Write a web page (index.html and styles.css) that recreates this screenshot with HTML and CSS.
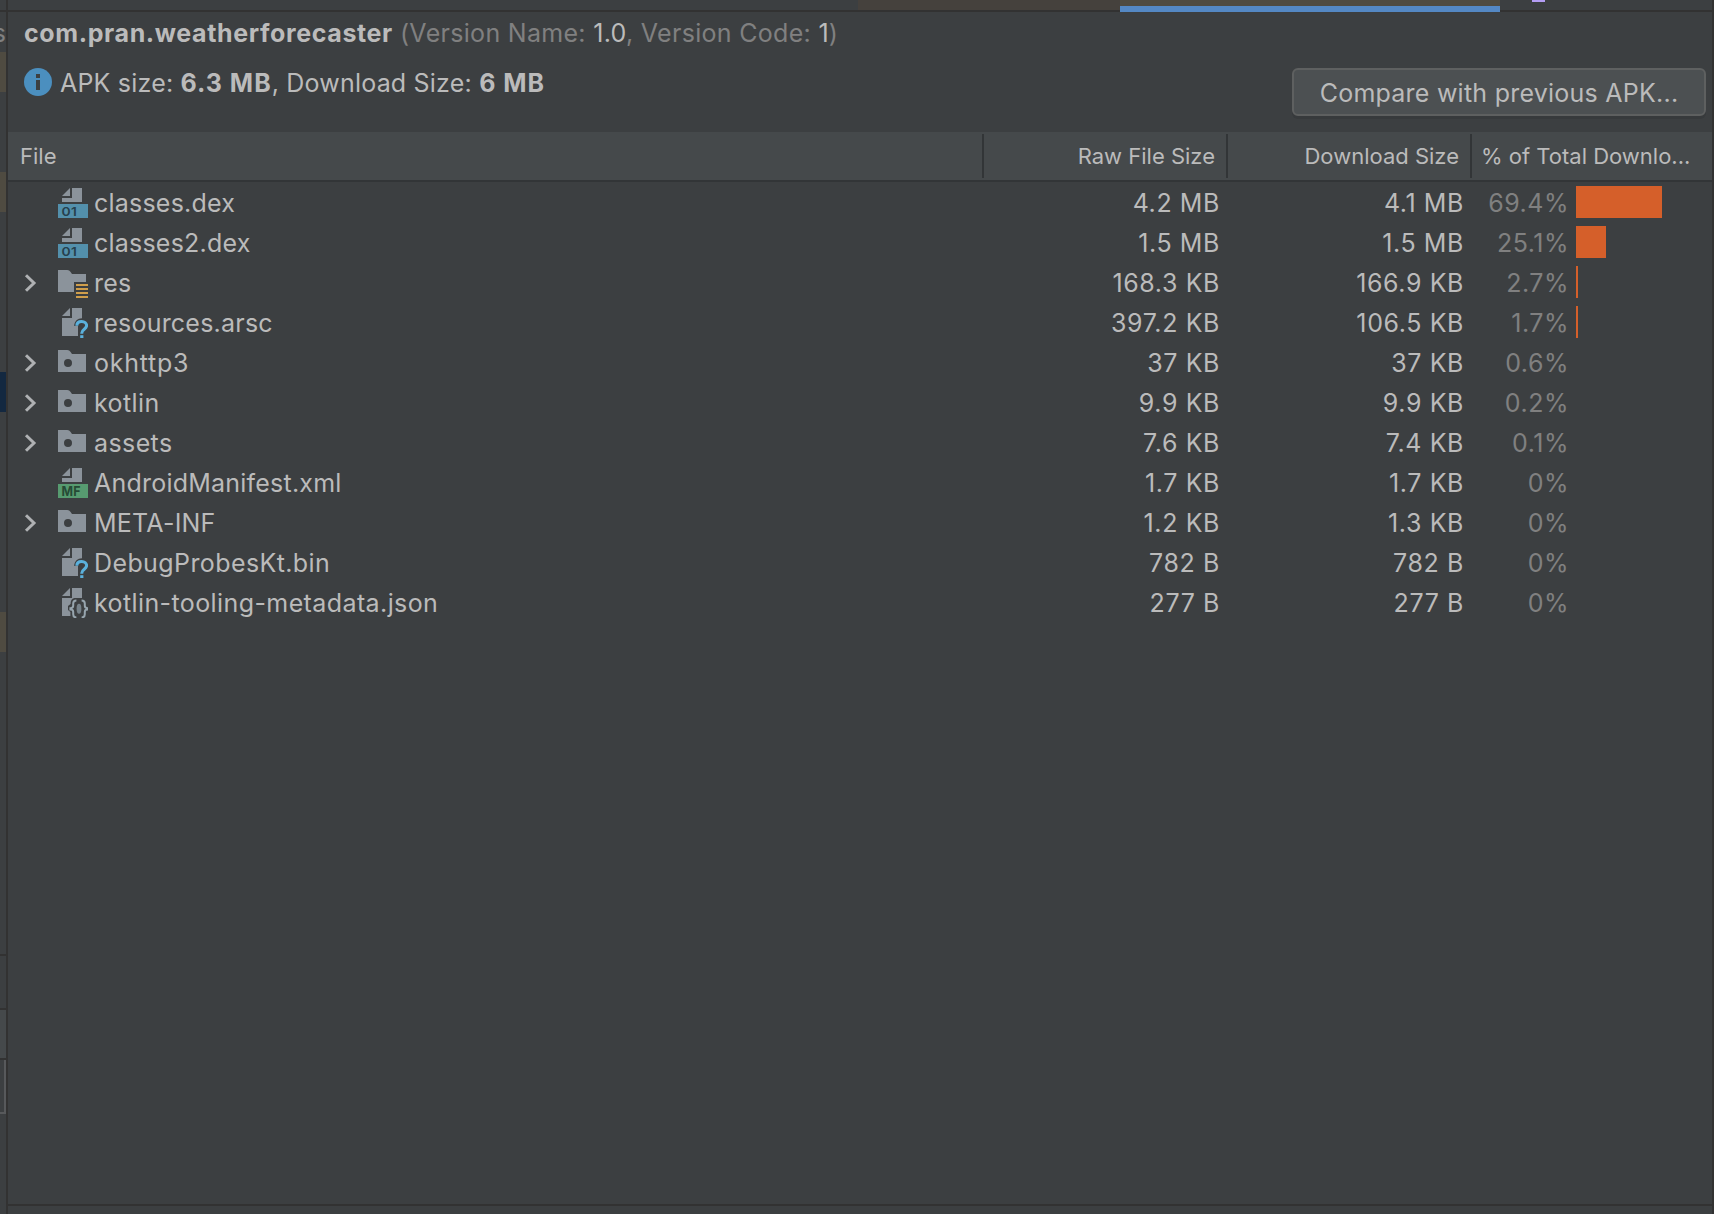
FILE: index.html
```html
<!DOCTYPE html>
<html lang="en">
<head>
<meta charset="utf-8">
<title>APK Analyzer</title>
<link rel="stylesheet" href="styles.css">
</head>
<body>
<svg class="defs" aria-hidden="true">
  <symbol id="page-half" viewBox="0 0 16 16"><path fill="#8b939b" d="M3 5l4-4v4zM8 1h5v7H3V6h5z"/></symbol>
  <symbol id="folder" viewBox="0 0 16 16"><path fill="#8b939b" fill-rule="evenodd" d="M1 2h4.6c.8 0 1.3.4 1.7 1L8 4h7v9H1zM6 6.5a2 2 0 1 0 0 4 2 2 0 0 0 0-4z"/></symbol>
  <symbol id="res" viewBox="0 0 16 16"><path fill="#8b939b" d="M1 2h4.6c.8 0 1.3.4 1.7 1L8 4h7v4H9v5H1z"/><path fill="#cf9e4b" d="M10 9h6v1h-6zM10 11h6v1h-6zM10 13h6v1h-6zM10 15h6v1h-6z"/></symbol>
  <symbol id="unknown" viewBox="0 0 16 16"><path fill="#8b939b" d="M3 5l4-4v4zM8 1h5v5.100c-2.200 0-3.800 1.400-3.900 3.900H11v5H3V6h5z"/><path fill="none" stroke="#5bb1dc" stroke-width="1.500" d="M10.400 9.900c0-1.400 1-2.200 2.400-2.200s2.500.9 2.500 2.100c0 1.800-2.400 1.800-2.400 3.700v.4"/><path fill="#5bb1dc" d="M12.100 14.600h1.600V16h-1.600z"/></symbol>
  <symbol id="json" viewBox="0 0 16 16"><path fill="#8b939b" d="M3 5l4-4v4zM8 1h5v5H9.200C7.800 6.400 7.300 7.400 7.300 9L6 10v2l1.200 1V15H3V6h5z"/><path fill="none" stroke="#97a5ae" d="M10.200 7.200c-1.300 0-1.600.6-1.600 1.600v1.100c0 .8-.4 1.200-1.400 1.200v.6c1 0 1.400.4 1.400 1.200v1.200c0 1 .3 1.600 1.600 1.600M12.800 7.200c1.300 0 1.600.6 1.600 1.600v1.100c0 .8.400 1.200 1.400 1.200v.6c-1 0-1.400.4-1.400 1.200v1.200c0 1-.3 1.600-1.600 1.600"/><ellipse cx="11.500" cy="11.400" rx="1.200" ry="2.500" fill="#77838b"/></symbol>
  <symbol id="chevron" viewBox="0 0 14 20"><path fill="none" stroke="#afb1b3" stroke-width="3" d="M2 2.200l8 7.800-8 7.800"/></symbol>
</svg>
<div class="window">
  <aside class="tool-strip">
    <div class="strip-head"></div>
    <div class="strip-label"><span>s</span></div>
    <div class="mark"></div>
    <div class="gap-80"></div>
    <div class="mark"></div>
    <div class="gap-160"></div>
    <div class="selection"></div>
    <div class="gap-200"></div>
    <div class="mark"></div>
    <div class="strip-rest"></div>
    <div class="strip-row"></div>
    <div class="strip-bar"></div>
    <div class="strip-box"></div>
  </aside>
  <main class="editor">
    <div class="tabs"><i class="tab"></i><i class="tab-active"></i><i class="tab-icon"></i></div>
    <header class="summary">
      <div class="info">
        <div class="title"><b>com.pran.weatherforecaster</b> <span class="version">(Version Name: <em>1.0</em>, Version Code: <em>1</em>)</span></div>
        <div class="sizes">
          <svg class="info-icon" viewBox="0 0 28 28"><circle cx="14" cy="14" r="14" fill="#4b8fbf"/><path fill="#3c3f41" d="M12 6h4v4h-4zM12 12h4v10h-4z"/></svg>
          <div class="size-text"><span>APK size: </span><b>6.3 MB</b><span>, Download Size: </span><b>6 MB</b></div>
        </div>
      </div>
      <button class="compare"><span>Compare with previous APK...</span></button>
    </header>
    <section class="table">
      <div class="head"><div>File</div><div>Raw File Size</div><div>Download Size</div><div class="left">% of Total Downlo...</div></div>
      <div class="row"><div class="name"><i class="arrow"></i><svg class="icon" viewBox="0 0 16 16"><use href="#page-half"/><path fill="#5390ac" d="M1 9h15v7H1z"/><text class="badge" x="2.700" y="14.800" textLength="8" lengthAdjust="spacingAndGlyphs">01</text></svg><span>classes.dex</span></div><div class="num">4.2 MB</div><div class="num">4.1 MB</div><div class="pct"><span>69.4%</span><i style="width:86px"></i></div></div>
      <div class="row"><div class="name"><i class="arrow"></i><svg class="icon" viewBox="0 0 16 16"><use href="#page-half"/><path fill="#5390ac" d="M1 9h15v7H1z"/><text class="badge" x="2.700" y="14.800" textLength="8" lengthAdjust="spacingAndGlyphs">01</text></svg><span>classes2.dex</span></div><div class="num">1.5 MB</div><div class="num">1.5 MB</div><div class="pct"><span>25.1%</span><i style="width:30px"></i></div></div>
      <div class="row"><div class="name"><svg class="arrow"><use href="#chevron"/></svg><svg class="icon"><use href="#res"/></svg><span>res</span></div><div class="num">168.3 KB</div><div class="num">166.9 KB</div><div class="pct"><span>2.7%</span><i style="width:2px"></i></div></div>
      <div class="row"><div class="name"><i class="arrow"></i><svg class="icon"><use href="#unknown"/></svg><span>resources.arsc</span></div><div class="num">397.2 KB</div><div class="num">106.5 KB</div><div class="pct"><span>1.7%</span><i style="width:2px"></i></div></div>
      <div class="row"><div class="name"><svg class="arrow"><use href="#chevron"/></svg><svg class="icon"><use href="#folder"/></svg><span class="wide">okhttp3</span></div><div class="num">37 KB</div><div class="num">37 KB</div><div class="pct"><span>0.6%</span></div></div>
      <div class="row"><div class="name"><svg class="arrow"><use href="#chevron"/></svg><svg class="icon"><use href="#folder"/></svg><span class="loose">kotlin</span></div><div class="num">9.9 KB</div><div class="num">9.9 KB</div><div class="pct"><span>0.2%</span></div></div>
      <div class="row"><div class="name"><svg class="arrow"><use href="#chevron"/></svg><svg class="icon"><use href="#folder"/></svg><span class="loose">assets</span></div><div class="num">7.6 KB</div><div class="num">7.4 KB</div><div class="pct"><span>0.1%</span></div></div>
      <div class="row"><div class="name"><i class="arrow"></i><svg class="icon" viewBox="0 0 16 16"><use href="#page-half"/><path fill="#579b70" d="M1 9h15v7H1z"/><text class="badge badge-mf" x="2.700" y="14.900" textLength="9.800" lengthAdjust="spacingAndGlyphs">MF</text></svg><span>AndroidManifest.xml</span></div><div class="num">1.7 KB</div><div class="num">1.7 KB</div><div class="pct"><span>0%</span></div></div>
      <div class="row"><div class="name"><svg class="arrow"><use href="#chevron"/></svg><svg class="icon"><use href="#folder"/></svg><span>META-INF</span></div><div class="num">1.2 KB</div><div class="num">1.3 KB</div><div class="pct"><span>0%</span></div></div>
      <div class="row"><div class="name"><i class="arrow"></i><svg class="icon"><use href="#unknown"/></svg><span class="loose">DebugProbesKt.bin</span></div><div class="num">782 B</div><div class="num">782 B</div><div class="pct"><span>0%</span></div></div>
      <div class="row"><div class="name"><i class="arrow"></i><svg class="icon"><use href="#json"/></svg><span class="loose">kotlin-tooling-metadata.json</span></div><div class="num">277 B</div><div class="num">277 B</div><div class="pct"><span>0%</span></div></div>
    </section>
    <footer class="status"></footer>
  </main>
</div>
</body>
</html>
```
FILE: styles.css
```css
* { box-sizing: border-box; }
body { margin: 0; background: #3c3f41; color: #bbbbbb; font: 25px "Inter", "Liberation Sans", sans-serif; overflow: hidden; }
.defs { position: absolute; width: 0; height: 0; }
.badge { font: 600 6.2px "Inter", sans-serif; fill: #26404d; }
.badge-mf { font-weight: 700; font-size: 6.8px; fill: #264a35; }
.window { display: flex; width: 1714px; height: 1214px; border-right: 2px solid #323232; }

.tool-strip { display: flex; flex-direction: column; width: 8px; border-right: 2px solid #323232; overflow: hidden; flex: none; }
.tool-strip > div { flex: none; }
.strip-head { height: 12px; border-bottom: 2px solid #323232; }
.strip-label { height: 40px; line-height: 42px; color: #808080; display: flex; justify-content: flex-end; overflow: hidden; }
.mark { height: 40px; background: #4f4b41; }
.gap-80 { height: 80px; }
.gap-160 { height: 160px; }
.gap-200 { height: 200px; }
.selection { height: 40px; background: #132840; }
.strip-rest { height: 304px; border-bottom: 2px solid #323232; }
.strip-row { height: 54px; border-bottom: 2px solid #323232; }
.strip-bar { height: 50px; background: #45494b; border-bottom: 2px solid #323232; }
.strip-box { height: 54px; border: solid #57595b; border-width: 0 2px 2px 0; }

.editor { display: flex; flex-direction: column; width: 1704px; }
.tabs { display: flex; height: 12px; border-bottom: 2px solid #323232; flex: none; }
.tab { margin-left: 850px; width: 262px; background: #45413d; }
.tab-active { width: 380px; height: 12px; background: #4f4b41; border-bottom: 6px solid #5488c4; }
.tab-icon { width: 13px; height: 2px; margin-left: 32px; background: #b39df3; }

.summary { display: flex; justify-content: space-between; height: 120px; flex: none; padding-right: 6px; }
.info { padding-left: 16px; }
.title { height: 40px; line-height: 42px; white-space: pre; }
.title b, .sizes b { font-weight: 700; }
.title b { letter-spacing: .62px; }
.version { color: #808080; letter-spacing: .3px; }
.version em { font-style: normal; color: #bbbbbb; }
.sizes { display: flex; align-items: center; height: 60px; }
.info-icon { width: 28px; height: 28px; margin-right: 8px; }
.size-text { white-space: pre; line-height: 42px; padding-top: 2px; letter-spacing: .2px; }
.size-text b { letter-spacing: 1px; }
.compare { width: 414px; height: 48px; margin-top: 56px; padding: 2px 0 0; border: 2px solid #5e6060; border-radius: 6px; background: #4c5052; box-shadow: 0 3px 0 #373a3c; color: #bbbbbb; font: inherit; letter-spacing: .24px; white-space: nowrap; }

.table { flex: 1; }
.head { display: grid; grid-template-columns: 974px 244px 244px 242px; height: 50px; padding: 2px 0; background: #45494b; border-bottom: 2px solid #323537; font-size: 22px; line-height: 44px; }
.head div { border-left: 2px solid #323537; padding-right: 11px; text-align: right; white-space: nowrap; }
.head div:first-child { border: 0; padding-left: 12px; text-align: left; }
.head .left { padding-left: 9px; padding-right: 0; text-align: left; }
.row { display: grid; grid-template-columns: 974px 244px 244px 242px; height: 40px; line-height: 42px; }
.name { display: flex; white-space: nowrap; letter-spacing: .22px; }
.loose { letter-spacing: .4px; }
.wide { letter-spacing: .75px; }
.arrow { width: 14px; height: 20px; margin: 11px 18px 0 16px; flex: none; }
.icon { width: 32px; height: 32px; margin: 4px 6px 0 0; flex: none; }
.num { padding-right: 6px; text-align: right; letter-spacing: .6px; }
.pct { display: flex; color: #808080; letter-spacing: .5px; }
.pct span { width: 99px; text-align: right; }
.pct i { height: 32px; margin: 4px 0 0 7px; background: #d55f2a; }
.status { height: 10px; border-top: 2px solid #323232; flex: none; }
```
